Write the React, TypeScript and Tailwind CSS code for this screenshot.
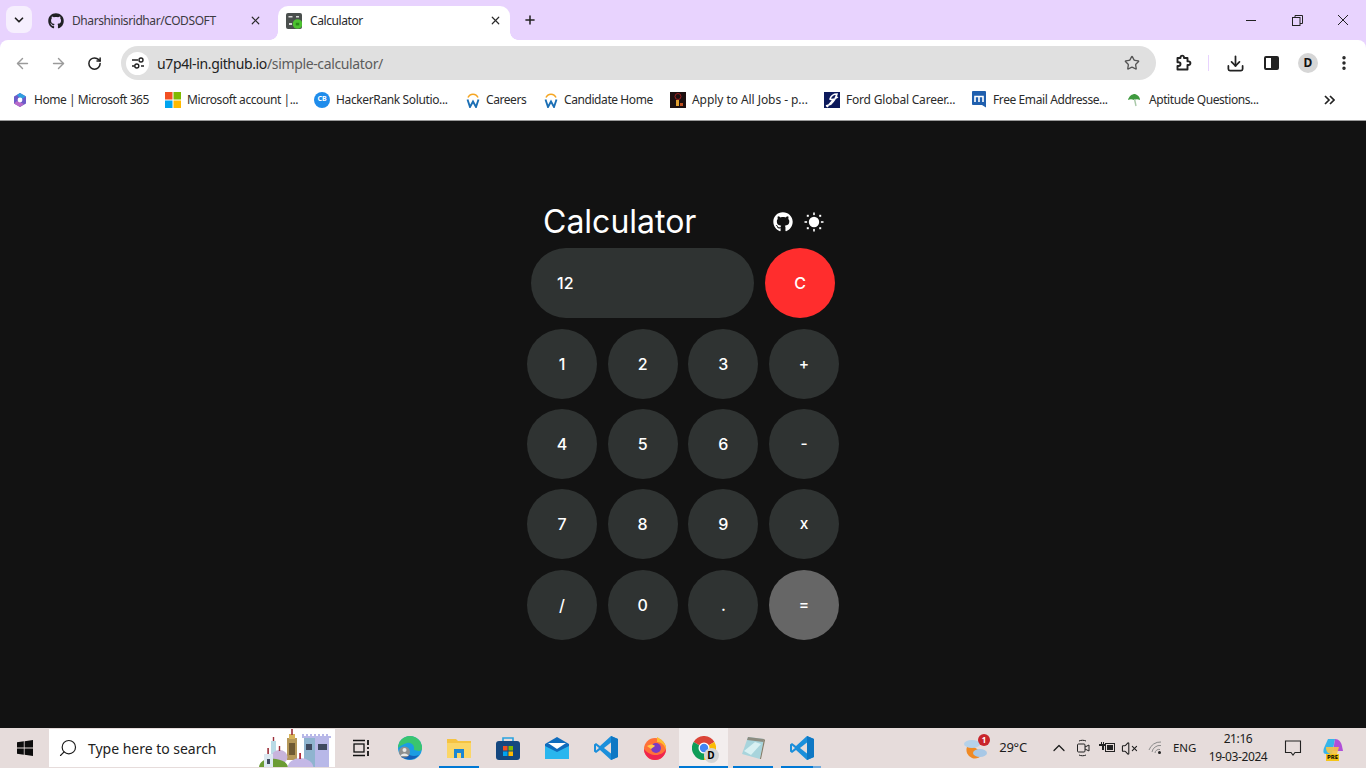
import { ArrowLeft, ArrowRight, ChevronDown, ChevronUp, Download, MoreVertical, Plus, RotateCw, Search, Star, VolumeX, X } from "lucide-react";
import { FaGithub } from "react-icons/fa";

const uiFont = "font-['Noto_Sans',sans-serif]";

function GithubMark({ size }: { size: number }) {
  return <FaGithub size={size} />;
}

function SunIcon() {
  return (
    <svg width="20" height="20" viewBox="0 0 20 20" fill="white">
      <circle cx="10" cy="10" r="5.2" />
      <rect x="9.2" y="0.5" width="1.6" height="2.6" />
      <rect x="9.2" y="16.9" width="1.6" height="2.6" />
      <rect x="0.5" y="9.2" width="2.6" height="1.6" />
      <rect x="16.9" y="9.2" width="2.6" height="1.6" />
      <rect x="2.8" y="2.8" width="2" height="2" />
      <rect x="15.2" y="2.8" width="2" height="2" />
      <rect x="2.8" y="15.2" width="2" height="2" />
      <rect x="15.2" y="15.2" width="2" height="2" />
    </svg>
  );
}

function CalcFavicon() {
  return (
    <svg width="16" height="16" viewBox="0 0 16 16">
      <rect width="16" height="16" rx="2" fill="#4a4f4d" />
      <rect x="2.5" y="3" width="4" height="1.5" fill="#d8d8d8" />
      <rect x="10" y="3" width="3" height="1.5" fill="#d8d8d8" />
      <rect x="3" y="10" width="3" height="2" fill="#d8d8d8" />
      <circle cx="11.5" cy="11" r="4.8" fill="#4cc230" />
      <rect x="9.8" y="9.8" width="3.4" height="2.6" fill="#2b8a1a" />
    </svg>
  );
}

function Tab({ active, icon, title }: { active?: boolean; icon: React.ReactNode; title: string }) {
  return (
    <div className={`relative flex h-[34px] w-[232px] items-center rounded-t-[10px] pb-[5px] pr-[8px] ${active ? "bg-white pl-[8px]" : "pl-[10px]"}`}>
      {active && (
        <>
          <div className="absolute bottom-0 left-[-8px] h-2 w-2 bg-[radial-gradient(circle_at_0_0,#e8d3fe_7.5px,#ffffff_8px)]" />
          <div className="absolute bottom-0 right-[-8px] h-2 w-2 bg-[radial-gradient(circle_at_100%_0,#e8d3fe_7.5px,#ffffff_8px)]" />
        </>
      )}
      <div className="flex w-[16px] items-center justify-center text-[#202124]">{icon}</div>
      <span className={`ml-2 flex-1 text-[12px] tracking-[-0.42px] ${active ? "text-[#2a2a2a]" : "text-[#3c3a42]"}`}>{title}</span>
      <X size={13} strokeWidth={2.2} className="text-[#2a2a2a]" />
    </div>
  );
}

function WindowControls() {
  return (
    <div className="ml-auto flex h-10 items-center">
      <div className="flex w-[46px] justify-center">
        <div className="h-px w-[10px] bg-[#222]" />
      </div>
      <div className="flex w-[46px] justify-center">
        <svg width="11" height="11" viewBox="0 0 11 11" fill="none" stroke="#222">
          <rect x="0.5" y="2.5" width="7.5" height="8" />
          <path d="M3 2.5V0.5H10.5V8.5H8" />
        </svg>
      </div>
      <div className="flex w-[46px] justify-center">
        <svg width="12" height="12" viewBox="0 0 12 12" stroke="#222" fill="none">
          <path d="M1 1L11 11M11 1L1 11" />
        </svg>
      </div>
    </div>
  );
}

function TabStrip() {
  return (
    <div className={`flex h-10 items-start bg-[#e8d3fe] ${uiFont}`}>
      <div className="ml-[6px] mt-[6px] flex h-[27px] w-[26px] items-center justify-center rounded-[8px] bg-[#f6effe]">
        <ChevronDown size={14} strokeWidth={3} className="text-[#222]" />
      </div>
      <div className="ml-[6px] mt-[6px]">
        <Tab icon={<GithubMark size={16} />} title="Dharshinisridhar/CODSOFT" />
      </div>
      <div className="ml-[8px] mt-[6px]">
        <Tab active icon={<CalcFavicon />} title="Calculator" />
      </div>
      <div className="ml-[13px] mt-[13px]">
        <Plus size={14} strokeWidth={2.6} className="text-[#222]" />
      </div>
      <WindowControls />
    </div>
  );
}

function PuzzleIcon() {
  return (
    <svg width="18" height="18" viewBox="0 0 18 18" fill="none" stroke="#222" strokeWidth="1.9" strokeLinejoin="round">
      <path d="M3.5 4H6.5V3A1.8 1.8 0 0 1 10 3V4H13.5V7.4H14.6A1.8 1.8 0 0 1 14.6 11H13.5V15.5H3.5V12H4.6A1.9 1.9 0 0 0 4.6 8.2H3.5Z" />
    </svg>
  );
}

function Toolbar() {
  return (
    <div className={`flex h-10 items-center rounded-t-[8px] bg-white pt-[6px] ${uiFont}`}>
      <div className="flex w-[44px] justify-center">
        <ArrowLeft size={17} strokeWidth={2} className="text-[#9a9a9a]" />
      </div>
      <div className="flex w-[28px] justify-center">
        <ArrowRight size={17} strokeWidth={2} className="text-[#9a9a9a]" />
      </div>
      <div className="flex w-[44px] justify-center">
        <RotateCw size={15} strokeWidth={2.4} className="text-[#222]" />
      </div>
      <div className="ml-[5px] flex h-[34px] w-[1035px] items-center rounded-full bg-[#e0e0e0]">
        <div className="ml-[5px] flex h-[23px] w-[23px] items-center justify-center rounded-full bg-white">
          <svg width="14" height="14" viewBox="0 0 14 14" fill="none" stroke="#222" strokeWidth="1.4">
            <path d="M1 4H7M1 10H3.5M10 10H13" />
            <circle cx="10" cy="4" r="2" />
            <circle cx="5.8" cy="10" r="2" />
          </svg>
        </div>
        <span className="ml-[8px] text-[14px] tracking-[-0.36px] text-[#222]">
          u7p4l-in.github.io<span className="text-[#5c5c5c]">/simple-calculator/</span>
        </span>
        <Star size={16} strokeWidth={2} className="ml-auto mr-[16px] text-[#555]" />
      </div>
      <div className="ml-[18px] flex items-center">
        <PuzzleIcon />
      </div>
      <div className="ml-[16px] h-[16px] w-px bg-[#e8d3fe]" />
      <div className="ml-[17px] flex items-center">
        <Download size={19} strokeWidth={2.2} className="text-[#222]" />
      </div>
      <div className="ml-[19px] flex h-[14px] w-[15px] rounded-[2px] border-2 border-[#222]">
        <div className="ml-auto h-full w-[6px] bg-[#222]" />
      </div>
      <div className="ml-[19px] flex h-[20px] w-[20px] items-center justify-center rounded-full bg-[#d6d6d6] text-[12px] font-bold text-[#111]">D</div>
      <MoreVertical size={18} strokeWidth={2.6} className="ml-[17px] text-[#222]" />
    </div>
  );
}

function M365Icon() {
  return (
    <svg width="16" height="16" viewBox="0 0 16 16">
      <path d="M8 1L14 4.5V11.5L8 15L2 11.5V4.5Z" fill="#6d5bc9" />
      <path d="M8 1L14 4.5L9 7.5L5 3Z" fill="#2f9fe0" />
      <path d="M2 11.5L8 15L12 12L5 9Z" fill="#b76ac9" />
      <circle cx="8" cy="8" r="2.4" fill="white" />
    </svg>
  );
}

function MsIcon() {
  return (
    <svg width="16" height="16" viewBox="0 0 16 16">
      <rect width="7.5" height="7.5" fill="#f25022" />
      <rect x="8.5" width="7.5" height="7.5" fill="#7fba00" />
      <rect y="8.5" width="7.5" height="7.5" fill="#00a4ef" />
      <rect x="8.5" y="8.5" width="7.5" height="7.5" fill="#ffb900" />
    </svg>
  );
}

function HackerIcon() {
  return (
    <div className="flex h-[16px] w-[16px] items-center justify-center rounded-full bg-[#1f8ceb] text-[7px] font-bold text-white">CB</div>
  );
}

function WorkdayIcon() {
  return (
    <svg width="16" height="16" viewBox="0 0 16 16" fill="none">
      <path d="M3 5.5A5.4 5.4 0 0 1 13 5.5" stroke="#f5a623" strokeWidth="1.5" />
      <path d="M2.5 7.5L5 15L8 9.5L11 15L13.5 7.5" stroke="#1b6fb5" strokeWidth="1.9" />
    </svg>
  );
}

function ApplyIcon() {
  return (
    <svg width="16" height="16" viewBox="0 0 16 16">
      <rect width="16" height="16" fill="#1d1010" />
      <circle cx="8" cy="4.5" r="3" fill="none" stroke="#a02020" />
      <rect x="6" y="8" width="3" height="6" fill="#e0a030" />
      <rect x="10" y="11" width="3" height="3" fill="#c05020" />
    </svg>
  );
}

function FordIcon() {
  return (
    <svg width="16" height="16" viewBox="0 0 16 16">
      <rect width="16" height="16" fill="#0d1a5c" />
      <path d="M2 14L7 12C10 9 12 6 13 2C10 2 7 4 6 7C8 8 11 7 14 5M3 15L9 8" fill="none" stroke="white" strokeWidth="1.5" />
    </svg>
  );
}

function MailIcon() {
  return (
    <svg width="16" height="17" viewBox="0 0 16 17">
      <path d="M1 1C1 0.5 1.5 0 2 0H14C14.5 0 15 0.5 15 1V16.5L11 14H2C1.5 14 1 13.5 1 13Z" fill="#1f5fae" />
      <path d="M4 11V5.5H12V11M8 5.5V11" fill="none" stroke="white" strokeWidth="1.6" />
    </svg>
  );
}

function UmbrellaIcon() {
  return (
    <svg width="14" height="14" viewBox="0 0 14 14">
      <path d="M1 7C2 3 5 1 8 1C11 2 13 4 13 7C11 6 9 6 7 7C5 6 3 6 1 7Z" fill="#3f9a3f" />
      <path d="M7.5 6L9 13" stroke="#a8c8a8" strokeWidth="1.4" />
    </svg>
  );
}

const bookmarks = [
  { width: "w-[153px]", icon: <M365Icon />, label: "Home | Microsoft 365", inset: "ml-[6px] tracking-[-0.45px]" },
  { width: "w-[149px]", icon: <MsIcon />, label: "Microsoft account |...", inset: "ml-[6px] tracking-[-0.42px]" },
  { width: "w-[151px]", icon: <HackerIcon />, label: "HackerRank Solutio...", inset: "ml-[6px] tracking-[-0.37px]" },
  { width: "w-[78px]", icon: <WorkdayIcon />, label: "Careers", inset: "ml-[5px] tracking-[-0.42px]" },
  { width: "w-[127px]", icon: <WorkdayIcon />, label: "Candidate Home", inset: "ml-[5px] tracking-[-0.42px]" },
  { width: "w-[154px]", icon: <ApplyIcon />, label: "Apply to All Jobs - p...", inset: "ml-[6px] tracking-[-0.06px]" },
  { width: "w-[147px]", icon: <FordIcon />, label: "Ford Global Career...", inset: "ml-[6px] tracking-[-0.2px]" },
  { width: "w-[155px]", icon: <MailIcon />, label: "Free Email Addresse...", inset: "ml-[6px] tracking-[-0.4px]" },
  { width: "w-[198px]", icon: <UmbrellaIcon />, label: "Aptitude Questions...", inset: "ml-[7px] tracking-[-0.42px]" },
];

function BookmarksBar() {
  return (
    <div className={`flex h-[41px] items-center border-b border-[#9a9a9a] bg-white pb-[1px] pl-[12px] ${uiFont}`}>
      {bookmarks.map((b) => (
        <div key={b.label} className={`flex items-center ${b.width}`}>
          <div className="flex w-[16px] justify-center">{b.icon}</div>
          <span className={`${b.inset} whitespace-nowrap text-[12px] text-[#2b2b2b]`}>{b.label}</span>
        </div>
      ))}
      <svg width="12" height="12" viewBox="0 0 12 12" fill="none" stroke="#222" strokeWidth="1.7" className="ml-[-1px]">
        <path d="M2 2L6 6L2 10M7 2L11 6L7 10" />
      </svg>
    </div>
  );
}

function Key({ label, small, color = "bg-[#2f3332]" }: { label: string; small?: boolean; color?: string }) {
  return (
    <button className={`flex h-[70px] w-[70px] items-center justify-center rounded-full font-medium text-white ${small ? "text-[15.5px]" : "text-[16px]"} ${color}`}>
      {label}
    </button>
  );
}

function Calculator() {
  return (
    <div className="flex h-[607px] flex-col items-center bg-[#121212] pt-[79px] font-['Inter',sans-serif]">
      <div className="flex h-[48px] w-[312px] flex-none items-center pb-[4px] pl-[16px]">
        <span className="text-[32px] leading-none text-white">Calculator</span>
        <div className="ml-[77px] flex items-center gap-[11px] text-white">
          <GithubMark size={20} />
          <SunIcon />
        </div>
      </div>
      <div className="flex w-[304px] justify-between">
        <div className="flex h-[70px] w-[223px] items-center rounded-full bg-[#2f3332] pl-[26px] text-[16px] font-medium text-white">12</div>
        <Key label="C" color="bg-[#ff2d2d]" />
      </div>
      <div className="mt-[11px] grid w-[312px] grid-cols-[70px_70px_70px_70px] grid-rows-[80px_80px_81px_70px] justify-between">
        {["1", "2", "3"].map((k) => <Key key={k} label={k} />)}
        <Key label="+" small />
        {["4", "5", "6"].map((k) => <Key key={k} label={k} />)}
        <Key label="-" small />
        {["7", "8", "9"].map((k) => <Key key={k} label={k} />)}
        <Key label="x" small />
        {["/", "0", "."].map((k) => <Key key={k} label={k} />)}
        <Key label="=" small color="bg-[#666666]" />
      </div>
    </div>
  );
}

function WinLogo() {
  return (
    <svg width="16" height="16" viewBox="0 0 16 16" fill="#0c0c0c">
      <path d="M0 2.3L6.8 1.3V7.5H0ZM7.6 1.2L16 0V7.5H7.6ZM0 8.4H6.8V14.7L0 13.7ZM7.6 8.4H16V16L7.6 14.8Z" />
    </svg>
  );
}

function Doodle() {
  return (
    <svg width="77" height="38" viewBox="0 0 77 38">
      <path d="M44 5H46V7H48V5H50V7H52V5H54V7H56V5H58V7H60V5H62V7H64V5H66V7H68V5H70V7H73V9H71V38H46V9H44Z" fill="#b8b8e8" />
      <rect x="46" y="9" width="11" height="29" fill="#8fb4cf" />
      <rect x="48" y="15" width="6" height="6" fill="#3f4a60" />
      <rect x="60" y="15" width="9" height="6" fill="#3f4a60" />
      <rect x="29" y="9" width="10" height="22" fill="#b5985a" />
      <rect x="31" y="14" width="6" height="12" fill="#6f5a34" />
      <rect x="31" y="5" width="6" height="5" fill="#d7b35a" />
      <rect x="33.2" y="0" width="1.6" height="6" fill="#9c2f3a" />
      <rect x="13" y="12" width="5" height="14" fill="#b9dbe6" />
      <rect x="14.8" y="8" width="1.4" height="4" fill="#9c2f3a" />
      <ellipse cx="21.5" cy="28" rx="8" ry="7" fill="#c8b4dc" />
      <rect x="20.8" y="17" width="1.4" height="5" fill="#9c2f3a" />
      <path d="M1 38C2 31 10 28 18 30C24 31 29 33 30 38Z" fill="#6b9c34" />
      <rect x="6" y="25" width="9" height="13" fill="#dbe8f0" />
      <rect x="9" y="30" width="3" height="5" fill="#3f4a60" />
      <rect x="9.3" y="19" width="1.6" height="6" fill="#9c2f3a" />
      <ellipse cx="42.5" cy="39" rx="13" ry="10" fill="#c4b8e6" />
      <rect x="41.2" y="24" width="1.8" height="6" fill="#b02a3c" />
    </svg>
  );
}

function EdgeIcon() {
  return (
    <svg width="24" height="24" viewBox="0 0 24 24">
      <circle cx="12" cy="12" r="12" fill="#1b9de2" />
      <path d="M0 12A12 12 0 0 1 24 12C24 16 20 15 16 14C17 9 13 6 9 7C5 8 2 10 0 12Z" fill="#39c56f" />
      <path d="M3 21C8 24 16 25 21 19C16 21 12 20 9 17Z" fill="#1560b8" />
      <circle cx="6.5" cy="16" r="5.5" fill="#8f8f8f" />
      <circle cx="6.5" cy="14" r="2" fill="#e8e8e8" />
      <path d="M2.5 20C3 16.5 10 16.5 10.5 20Z" fill="#e8e8e8" />
    </svg>
  );
}

function FolderIcon() {
  return (
    <svg width="24" height="20" viewBox="0 0 24 20">
      <path d="M0 1H9L11 3H24V20H0Z" fill="#f5c342" />
      <rect y="5" width="24" height="15" fill="#fbd667" />
      <rect x="7" y="11" width="10" height="9" fill="#1c86d4" />
      <rect x="10" y="15" width="4" height="5" fill="#fbd667" />
    </svg>
  );
}

function StoreIcon() {
  return (
    <svg width="24" height="24" viewBox="0 0 24 24">
      <path d="M7 5V2H17V5" fill="none" stroke="#2aa3e0" strokeWidth="1.6" />
      <rect y="5" width="24" height="19" rx="3" fill="#14477f" />
      <rect x="7" y="10" width="4.5" height="4.5" fill="#f25022" />
      <rect x="12.5" y="10" width="4.5" height="4.5" fill="#7fba00" />
      <rect x="7" y="15.5" width="4.5" height="4.5" fill="#00a4ef" />
      <rect x="12.5" y="15.5" width="4.5" height="4.5" fill="#ffb900" />
    </svg>
  );
}

function MailAppIcon() {
  return (
    <svg width="24" height="22" viewBox="0 0 24 22">
      <path d="M0 7L12 0L24 7V22H0Z" fill="#0f6cbd" />
      <path d="M3 6H21L12 12Z" fill="white" />
      <path d="M0 9L12 15L24 9V22H0Z" fill="#29b6ee" />
    </svg>
  );
}

function VsCodeIcon() {
  return (
    <svg width="24" height="24" viewBox="0 0 24 24">
      <path d="M17 0L24 3V21L17 24L6 14L2 17L0 15.5V8.5L2 7L6 10Z" fill="#1b8fdb" />
      <path d="M17 0L24 3V21L17 24Z" fill="#0f78c4" />
      <path d="M17 6.5L10 12L17 17.5Z" fill="#e6dcdb" />
      <path d="M2 9.5L5 12L2 14.5Z" fill="#e6dcdb" />
    </svg>
  );
}

function FirefoxIcon() {
  return (
    <svg width="24" height="24" viewBox="0 0 24 24">
      <circle cx="12" cy="13" r="11" fill="#ff7139" />
      <path d="M14 1C20 4 24 9 23 14C22 9 18 6 14 6Z" fill="#ffbd2f" />
      <path d="M1 13A11 11 0 0 0 23 13C20 20 8 22 1 13Z" fill="#f0254f" />
      <circle cx="13" cy="12" r="5" fill="#7a3bc4" />
      <path d="M4 10C7 8 10 8 12 10L8 13Z" fill="#ffca4a" />
    </svg>
  );
}

function ChromeIcon() {
  return (
    <div className="relative h-[24px] w-[24px]">
      <svg width="24" height="24" viewBox="0 0 24 24">
        <path d="M12 12L1.6 6A12 12 0 0 1 22.4 6Z" fill="#db4437" />
        <path d="M12 12L22.4 6A12 12 0 0 1 12 24Z" fill="#fbbc05" />
        <path d="M12 12L12 24A12 12 0 0 1 1.6 6Z" fill="#0f9d58" />
        <circle cx="12" cy="12" r="5.5" fill="white" />
        <circle cx="12" cy="12" r="4.2" fill="#4285f4" />
      </svg>
      <div className="absolute bottom-[-3px] right-[-3px] flex h-[15px] w-[15px] items-center justify-center rounded-full bg-[#d5d5d5] font-['Noto_Sans',sans-serif] text-[10px] font-bold text-black">D</div>
    </div>
  );
}

function NotepadIcon() {
  return (
    <svg width="24" height="24" viewBox="0 0 24 24">
      <path d="M7 1L23 3L19 23L1 18Z" fill="#a8d4dc" />
      <path d="M7 1L23 3L22.5 6L6 4Z" fill="#8c8c80" />
      <path d="M19 23L23 3L24 4L20 23Z" fill="#7f7a66" />
      <path d="M3 15L14 6L20 8L10 19Z" fill="#d8f0f2" />
    </svg>
  );
}

function AppSlot({ children, bar, active }: { children: React.ReactNode; bar?: React.ReactNode; active?: boolean }) {
  return (
    <div className={`relative flex h-10 w-[49px] items-center justify-center ${active ? "bg-[#f3eeee]" : ""}`}>
      {children}
      {bar}
    </div>
  );
}

const underline = <div className="absolute bottom-0 left-[5px] h-[2px] w-[40px] bg-[#0078d4]" />;

function Tray() {
  return (
    <div className="ml-auto flex h-10 items-center text-[#1c1c1c]">
      <div className="relative h-[22px] w-[24px]">
        <svg width="24" height="22" viewBox="0 0 24 22">
          <path d="M3 10A8 8 0 0 0 19 16L10 10Z" fill="#f08a24" />
          <ellipse cx="8" cy="7" rx="8" ry="4" fill="#b5d2ea" />
          <ellipse cx="16" cy="16" rx="7" ry="4" fill="#a8c8e6" />
        </svg>
        <div className="absolute right-[-2px] top-[-3px] flex h-[12px] w-[12px] items-center justify-center rounded-full bg-[#c9252b] text-[8px] font-bold text-white">1</div>
      </div>
      <span className="ml-[11px] text-[13px] tracking-[-0.2px]">29°C</span>
      <ChevronUp size={20} strokeWidth={1.5} className="ml-[22px]" />
      <svg width="14" height="18" viewBox="0 0 14 18" fill="none" stroke="#222" className="ml-[7px]">
        <rect x="1.5" y="5" width="7.5" height="8" rx="1" />
        <path d="M9 8L13 6V12L9 10M3 2C5 1 8 1 10 2M3 16C5 17 8 17 10 16" />
      </svg>
      <svg width="16" height="12" viewBox="0 0 16 12" fill="#222" className="ml-[9px]">
        <path d="M0 2H2V0H3V2H4V0H5V2H6V4H5V8H3V4H0Z" />
        <rect x="6.5" y="1.5" width="9" height="8" fill="none" stroke="#222" />
        <rect x="8" y="3" width="6" height="5" />
      </svg>
      <VolumeX size={17} strokeWidth={1.5} className="ml-[6px]" />
      <svg width="16" height="14" viewBox="0 0 16 14" fill="none" stroke="#8a8a8a" className="ml-[10px]">
        <path d="M1 9A12 12 0 0 1 13 1M4 11A8 8 0 0 1 13 4.5M7 12A4 4 0 0 1 12 8.5" />
        <circle cx="11.5" cy="11.5" r="1.5" fill="#222" stroke="none" />
      </svg>
      <span className="ml-[9px] w-[24px] text-[11.5px] tracking-[-0.1px]">ENG</span>
      <div className="ml-[7px] flex w-[68px] flex-col items-center text-[12px] leading-[18px] tracking-[-0.4px]">
        <span>21:16</span>
        <span className="whitespace-nowrap">19-03-2024</span>
      </div>
      <svg width="18" height="18" viewBox="0 0 18 18" fill="none" stroke="#222" strokeWidth="1.1" className="ml-[12px]">
        <path d="M1.5 2H16.5V13.5H11L9 16L7 13.5H1.5Z" />
      </svg>
      <div className="relative ml-[21px] mr-[23px] h-[20px] w-[20px]">
        <svg width="20" height="20" viewBox="0 0 20 20">
          <path d="M5 1H12L9 16H3C0 16 0 13 1 10Z" fill="#36b5ea" />
          <path d="M12 1C16 1 18 4 19 8L20 13H10Z" fill="#b04fd8" />
          <path d="M3 9C3 14 5 16 9 16H14L16 9Z" fill="#f6c445" opacity="0.9" />
        </svg>
        <div className="absolute bottom-[-3px] left-[3px] bg-[#f5c518] px-[1px] text-[6px] font-bold leading-[7px] text-black">PRE</div>
      </div>
    </div>
  );
}

function Taskbar() {
  return (
    <div className={`flex h-10 items-center bg-[#e6dcdb] ${uiFont}`}>
      <div className="flex w-[49px] justify-center">
        <WinLogo />
      </div>
      <div className="flex h-[38px] w-[286px] items-center bg-white pl-[9px]">
        <Search size={20} strokeWidth={1.4} className="-scale-x-100 text-[#1c1c1c]" />
        <span className="ml-[10px] whitespace-nowrap text-[14px] tracking-[-0.02px] text-[#222]">Type here to search</span>
        <div className="ml-auto flex h-full">
          <Doodle />
        </div>
      </div>
      <div className="ml-px flex">
        <AppSlot>
          <svg width="18" height="18" viewBox="0 0 18 18" fill="none" stroke="#111" strokeWidth="1.3">
            <rect x="2" y="5" width="10" height="8" />
            <path d="M1 1.5H13M1 16.5H13" />
            <path d="M16 1V6M16 8V10M16 12V17" strokeWidth="1.8" />
          </svg>
        </AppSlot>
        <AppSlot><EdgeIcon /></AppSlot>
        <AppSlot bar={underline}><FolderIcon /></AppSlot>
        <AppSlot><StoreIcon /></AppSlot>
        <AppSlot><MailAppIcon /></AppSlot>
        <AppSlot><VsCodeIcon /></AppSlot>
        <AppSlot><FirefoxIcon /></AppSlot>
        <AppSlot active bar={<div className="absolute bottom-0 left-0 h-[2px] w-full bg-[#0078d4]" />}><ChromeIcon /></AppSlot>
        <AppSlot bar={underline}><NotepadIcon /></AppSlot>
        <AppSlot bar={<div className="absolute bottom-0 left-[4px] flex h-[2px] w-[40px]"><div className="w-[32px] bg-[#0078d4]" /><div className="flex-1 bg-[#6fa9dc]" /></div>}><VsCodeIcon /></AppSlot>
      </div>
      <Tray />
    </div>
  );
}

export default function App() {
  return (
    <div className="h-[768px] w-[1366px] overflow-hidden bg-[#e8d3fe]">
      <TabStrip />
      <Toolbar />
      <BookmarksBar />
      <Calculator />
      <Taskbar />
    </div>
  );
}
